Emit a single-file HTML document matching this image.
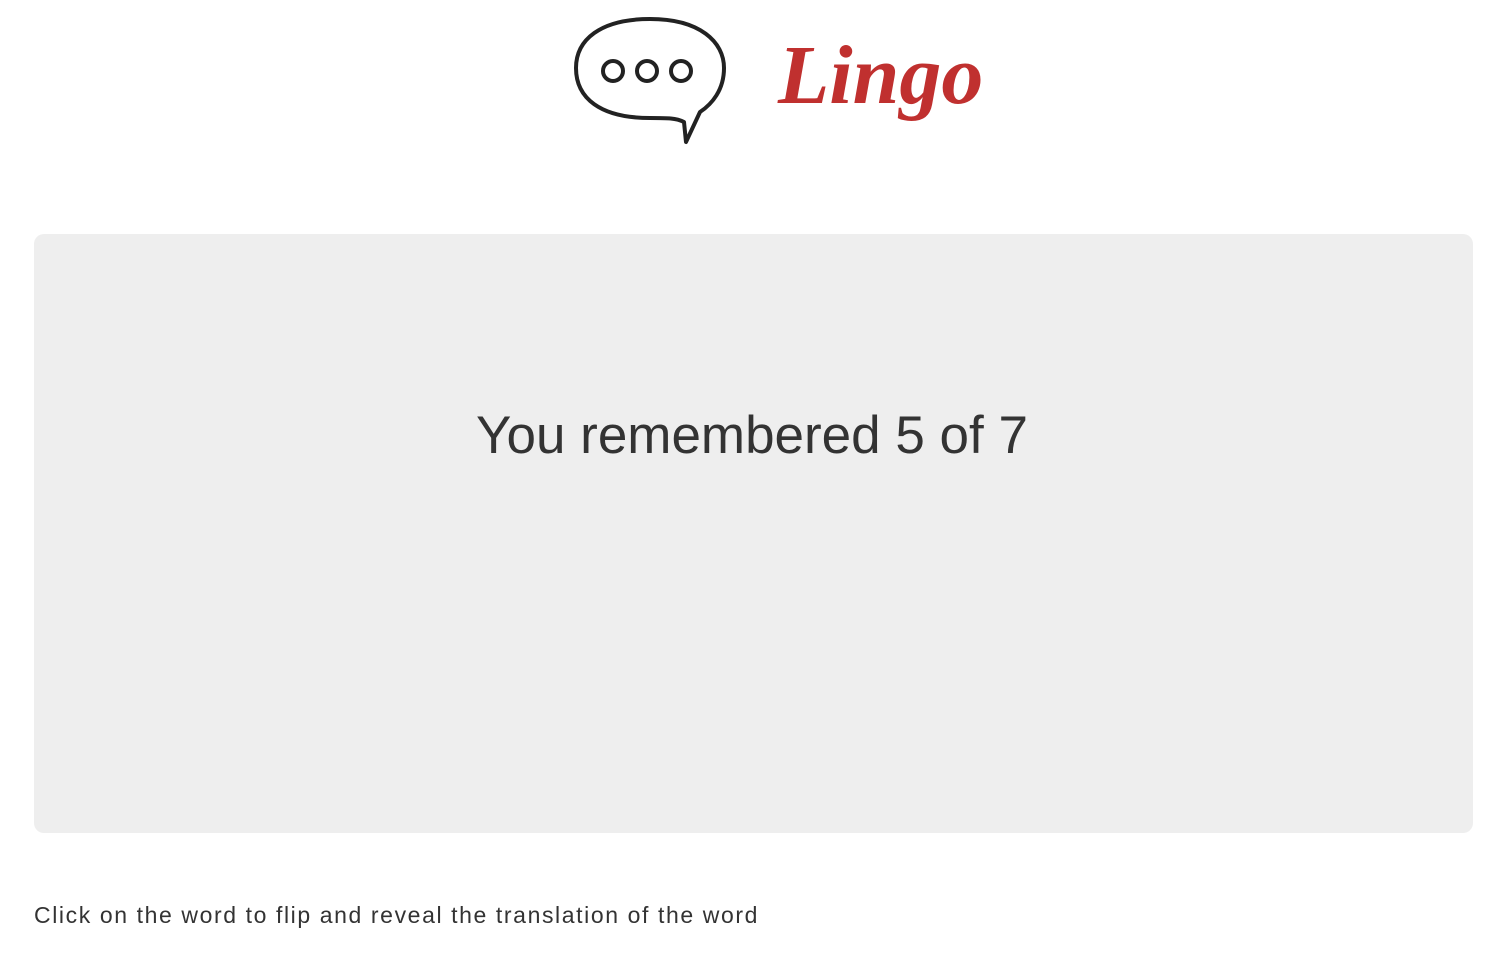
<!DOCTYPE html>
<html><head><style>
body{margin:0;background:#fff;width:1488px;height:956px;position:relative;font-family:"Liberation Sans",sans-serif;overflow:hidden}
.card{position:absolute;left:34px;top:234px;width:1439px;height:599px;background:#eeeeee;border-radius:10px}
.msg{position:absolute;left:0;right:0;top:404px;text-align:center;font-size:53px;color:#333;line-height:64px;padding-left:16px}
.hint{position:absolute;left:34px;top:900px;font-size:23px;letter-spacing:1.6px;color:#333;line-height:30px}
.logo{position:absolute;left:778px;top:26px;font-family:"Liberation Serif",serif;font-style:italic;font-weight:bold;font-size:84px;color:#c0302f;line-height:100px}
</style></head><body>
<svg style="position:absolute;left:560px;top:10px" width="180" height="145" viewBox="560 10 180 145">
<path d="M650 19 C700 19 724 42 724 68 C724 90 712 104 700 112 L686 142 L684 122 C676 118 668 118 650 118 C600 118 576 98 576 68 C576 40 600 19 650 19 Z" fill="none" stroke="#222" stroke-width="4" stroke-linejoin="round"/>
<circle cx="613" cy="71" r="10" fill="none" stroke="#222" stroke-width="4"/>
<circle cx="647" cy="71" r="10" fill="none" stroke="#222" stroke-width="4"/>
<circle cx="681" cy="71" r="10" fill="none" stroke="#222" stroke-width="4"/>
</svg>
<div class="logo">Lingo</div>
<div class="card"></div>
<div class="msg">You remembered 5 of 7</div>
<div class="hint">Click on the word to flip and reveal the translation of the word</div>
</body></html>
